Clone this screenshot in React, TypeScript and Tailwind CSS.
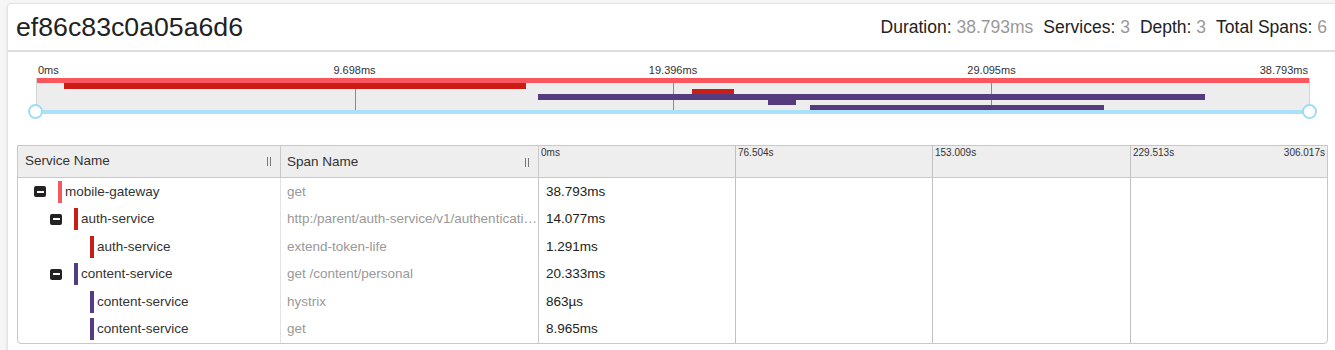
import React from "react";

const TOTAL_MS = 38.793;

interface SpanRow {
  service: string;
  name: string;
  level: number;
  start: number;
  dur: number;
  label: string;
  color: string;
  collapsible?: boolean;
}

const SPANS: SpanRow[] = [
  { service: "mobile-gateway", name: "get", level: 0, start: 0, dur: 38.793, label: "38.793ms", color: "#f9565d", collapsible: true },
  {
    service: "auth-service",
    name: "http:/parent/auth-service/v1/authentication/token",
    level: 1,
    start: 0.822,
    dur: 14.077,
    label: "14.077ms",
    color: "#c91d16",
    collapsible: true,
  },
  { service: "auth-service", name: "extend-token-life", level: 2, start: 19.975, dur: 1.291, label: "1.291ms", color: "#c91d16" },
  { service: "content-service", name: "get /content/personal", level: 1, start: 15.286, dur: 20.333, label: "20.333ms", color: "#553c7e", collapsible: true },
  { service: "content-service", name: "hystrix", level: 2, start: 22.29, dur: 0.863, label: "863µs", color: "#553c7e" },
  { service: "content-service", name: "get", level: 2, start: 23.568, dur: 8.965, label: "8.965ms", color: "#553c7e" },
];

const STATS = [
  { k: "Duration", v: "38.793ms" },
  { k: "Services", v: "3" },
  { k: "Depth", v: "3" },
  { k: "Total Spans", v: "6" },
];

const TICKS = ["9.698ms", "19.396ms", "29.095ms"];

/** Poignée de redimensionnement des colonnes (deux petits traits). */
function Handle() {
  return (
    <span className="flex h-[9px] items-stretch gap-[2px]">
      <span className="w-px bg-[#777]" />
      <span className="w-px bg-[#777]" />
    </span>
  );
}

function MinusBox() {
  return (
    <span className="flex h-[11px] w-[12px] items-center justify-center rounded-[2px] bg-[#222]">
      <span className="h-[2px] w-[7px] bg-white" />
    </span>
  );
}

function Minimap() {
  return (
    <div className="ml-[28px] w-[1274px] pt-[11px]">
      <div className="relative h-[15px] text-[11px] leading-[15px] text-[#333]">
        <span className="absolute left-[2px] top-0">0ms</span>
        <span className="absolute left-1/4 top-0 -translate-x-1/2">{TICKS[0]}</span>
        <span className="absolute left-1/2 top-0 -translate-x-1/2">{TICKS[1]}</span>
        <span className="absolute left-3/4 top-0 -translate-x-1/2">{TICKS[2]}</span>
        <span className="absolute right-[2px] top-0">38.793ms</span>
      </div>
      <div className="relative h-[32px] border-x border-[#d4d4d4] bg-[#ededed]">
        <span className="absolute left-1/4 top-0 h-full w-px bg-[#8a8a8a]" />
        <span className="absolute left-1/2 top-0 h-full w-px bg-[#8a8a8a]" />
        <span className="absolute left-3/4 top-0 h-full w-px bg-[#8a8a8a]" />
        {SPANS.map((s, i) => (
          <span
            key={i}
            className="absolute h-[5.4px]"
            style={{
              top: `${i * 5.4}px`,
              left: `${(s.start / TOTAL_MS) * 100}%`,
              width: `${(s.dur / TOTAL_MS) * 100}%`,
              background: s.color,
            }}
          />
        ))}
      </div>
      <div className="relative h-[4px] bg-[#a9e1f9]">
        <span className="absolute -left-[8px] -top-[6px] h-[15px] w-[15px] rounded-full border-2 border-[#a0dbf6] bg-white" />
        <span className="absolute -right-[7px] -top-[6px] h-[15px] w-[15px] rounded-full border-2 border-[#a0dbf6] bg-white" />
      </div>
    </div>
  );
}

function TraceTable() {
  const tl = ["w-[197px]", "w-[197px]", "w-[198px]", "flex-1"];
  return (
    <div className="ml-[9px] mt-[31px] w-[1311px] overflow-hidden rounded-b-[4px] border border-[#c8c8c8] text-[13.5px]">
      <div className="flex h-[32px] border-b border-[#c8c8c8] bg-[#eeeeee] text-[#333]">
        <div className="flex w-[263px] items-center justify-between border-r border-[#c8c8c8] pl-[7px] pr-[9px]">
          <span>Service Name</span>
          <Handle />
        </div>
        <div className="flex w-[258px] items-center justify-between border-r border-[#c8c8c8] pl-[6px] pr-[9px] pt-[1px]">
          <span>Span Name</span>
          <Handle />
        </div>
        <div className={`${tl[0]} border-r border-[#c0c0c0] pl-[2px] pt-[1px] text-[10px] leading-[12px]`}>0ms</div>
        <div className={`${tl[1]} border-r border-[#c0c0c0] pl-[2px] pt-[1px] text-[10px] leading-[12px]`}>76.504s</div>
        <div className={`${tl[2]} border-r border-[#c0c0c0] pl-[2px] pt-[1px] text-[10px] leading-[12px]`}>153.009s</div>
        <div className={`${tl[3]} flex justify-between px-[2px] pt-[1px] text-[10px] leading-[12px]`}>
          <span>229.513s</span>
          <span>306.017s</span>
        </div>
      </div>
      {SPANS.map((s, i) => (
        <div key={i} className="flex h-[27.5px]">
          <div className="flex w-[263px] items-center border-r border-[#e2e2e2]" style={{ paddingLeft: `${16 + s.level * 16}px` }}>
            <span className="flex w-[12px] justify-center">{s.collapsible ? <MinusBox /> : null}</span>
            <span className="ml-[12px] h-[22px] w-[4px]" style={{ background: s.color }} />
            <span className="ml-[3px] text-[#333]">{s.service}</span>
          </div>
          <div className="flex w-[258px] items-center border-r border-[#c8c8c8] pl-[6px] pr-px text-[#999]">
            <span className="truncate">{s.name}</span>
          </div>
          <div className={`${tl[0]} flex items-center border-r border-[#c0c0c0] pl-[7px] text-[#222]`}>{s.label}</div>
          <div className={`${tl[1]} border-r border-[#c0c0c0]`} />
          <div className={`${tl[2]} border-r border-[#c0c0c0]`} />
          <div className={tl[3]} />
        </div>
      ))}
    </div>
  );
}

export default function App() {
  return (
    <div className="h-[350px] w-[1335px] overflow-hidden bg-[#f6f6f6] pl-[7px] pt-[3px] font-['Liberation_Sans',Arial,sans-serif]">
      <div className="h-[400px] w-[1345px] rounded-t-[4px] border border-[#e4e4e4] bg-white shadow-sm">
        <div className="flex h-[48px] items-center justify-between border-b-2 border-[#dddddd] pl-[8px] pr-[24px]">
          <h1 className="text-[26.7px] leading-none text-[#222]">ef86c83c0a05a6d6</h1>
          <div className="flex gap-[10px] text-[17.5px] text-[#222]">
            {STATS.map((s) => (
              <span key={s.k}>
                {s.k}: <span className="text-[#999]">{s.v}</span>
              </span>
            ))}
          </div>
        </div>
        <Minimap />
        <TraceTable />
      </div>
    </div>
  );
}
